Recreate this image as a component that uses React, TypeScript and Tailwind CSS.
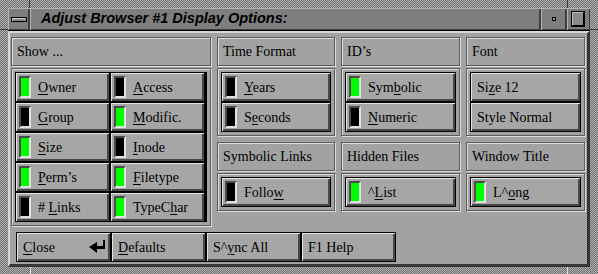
import type { ReactNode } from "react";

function Mn({ children }: { children: ReactNode }) {
  return <span className="underline decoration-1 underline-offset-[2px]">{children}</span>;
}

function Indicator({ on }: { on: boolean }) {
  return (
    <div
      className={`ml-[2px] h-[22px] w-[12px] shrink-0 border-2 border-t-[#4a4a4a] border-l-[#4a4a4a] border-b-[#e2e2e2] border-r-[#e2e2e2] ${
        on ? "bg-[#00ff00]" : "bg-black"
      }`}
    />
  );
}

function Btn({ on, children, icon }: { on?: boolean; children: ReactNode; icon?: ReactNode }) {
  return (
    <div className="flex h-[28px] items-center bg-[#a6a6a6] pl-px shadow-[inset_1px_1px_0_#e4e4e4,inset_-2px_-2px_0_#484848]">
      {on !== undefined ? (
        <>
          <Indicator on={on} />
          <span className="ml-[7px]">{children}</span>
        </>
      ) : (
        <span className="ml-[5px]">{children}</span>
      )}
      {icon}
    </div>
  );
}

function Group({ title, children }: { title: string; children: ReactNode }) {
  return (
    <div className="flex flex-col gap-[2px]">
      <div className="flex h-[29px] items-center border border-[#5c5c5c] pl-[5px] shadow-[inset_1px_1px_0_#dcdcdc,1px_1px_0_#dcdcdc]">
        {title}
      </div>
      <div className="border border-[#5c5c5c] p-[3px] shadow-[inset_1px_1px_0_#dcdcdc,1px_1px_0_#dcdcdc]">
        {children}
      </div>
    </div>
  );
}

function EnterArrow() {
  return (
    <svg width="17" height="13" viewBox="0 0 17 13" className="ml-auto mr-[4px] mt-[-2px]">
      <polygon points="0,7 8,2 8,13" fill="black" />
      <rect x="8" y="6" width="8" height="3" fill="black" />
      <rect x="14" y="0" width="2" height="9" fill="black" />
    </svg>
  );
}

export default function App() {
  return (
    <div className="relative flex h-[274px] w-[598px] flex-col bg-[repeating-conic-gradient(#6e6e6e_0%_25%,#b2b2b2_0%_50%)] bg-size-[2px_2px] px-[8px] pt-[8px] pb-[7px] font-['Liberation_Serif','Times_New_Roman',serif] text-[14px] text-black">
      {/* frame resize marks */}
      <div className="absolute left-[29px] top-0 h-[8px] w-px bg-[#3c3c3c]" />
      <div className="absolute left-[567px] top-0 h-[8px] w-px bg-[#3c3c3c]" />
      <div className="absolute left-[30px] bottom-0 h-[7px] w-px bg-[#e0e0e0]" />
      <div className="absolute left-[567px] bottom-0 h-[7px] w-px bg-[#e0e0e0]" />
      <div className="absolute left-0 top-[29px] h-px w-[8px] bg-[#3c3c3c]" />
      <div className="absolute right-0 top-[29px] h-px w-[8px] bg-[#3c3c3c]" />

      {/* title bar */}
      <div className="flex h-[22px] bg-[#7e7e7e]">
        <div className="flex w-[22px] items-center justify-center shadow-[inset_1px_1px_0_#b4b4b4,inset_-2px_-1px_0_#3e3e3e]">
          <div className="h-[5px] w-[16px] border border-black bg-[#8a8a8a] shadow-[inset_1px_1px_0_#d0d0d0]" />
        </div>
        <div className="flex flex-1 items-center pl-[11px] font-['Liberation_Sans',Arial,sans-serif] text-[14.5px] font-bold italic shadow-[inset_1px_1px_0_#b4b4b4,inset_-2px_-1px_0_#3e3e3e]">
          Adjust Browser #1 Display Options:
        </div>
        <div className="flex w-[26px] items-center justify-center shadow-[inset_1px_1px_0_#b4b4b4,inset_-2px_-1px_0_#3e3e3e]">
          <div className="h-[4px] w-[4px] border border-black bg-[#9a9a9a]" />
        </div>
        <div className="flex w-[23px] items-center justify-center pr-[2px] shadow-[inset_1px_1px_0_#b4b4b4,inset_-1px_-1px_0_#3e3e3e]">
          <div className="h-[16px] w-[14px] border border-black border-r-2 border-b-2 bg-[#8a8a8a] shadow-[inset_1px_1px_0_#c0c0c0]" />
        </div>
      </div>
      <div className="h-px bg-black" />

      {/* client area */}
      <div className="flex flex-1 flex-col border-t-2 border-l-2 border-r-[3px] border-b-[3px] border-t-[#d6d6d6] border-l-[#d6d6d6] border-r-[#363636] border-b-[#363636] bg-[#a2a2a2] pt-[4px] pl-px">
        <div className="flex items-start gap-[6px]">
          <div className="w-[200px]">
            <Group title="Show ...">
              <div className="grid grid-cols-[93px_93px] gap-[2px] bg-black p-px">
                <Btn on><Mn>O</Mn>wner</Btn>
                <Btn on={false}><Mn>A</Mn>ccess</Btn>
                <Btn on={false}><Mn>G</Mn>roup</Btn>
                <Btn on><Mn>M</Mn>odific.</Btn>
                <Btn on><Mn>S</Mn>ize</Btn>
                <Btn on={false}><Mn>I</Mn>node</Btn>
                <Btn on><Mn>P</Mn>erm’s</Btn>
                <Btn on><Mn>F</Mn>iletype</Btn>
                <Btn on={false}># <Mn>L</Mn>inks</Btn>
                <Btn on>TypeC<Mn>h</Mn>ar</Btn>
              </div>
            </Group>
          </div>

          <div className="grid grid-cols-[118px_119px_119px] gap-x-[6px] gap-y-[6px]">
            <Group title="Time Format">
              <div className="flex flex-col gap-[2px] bg-black p-px">
                <Btn on={false}><Mn>Y</Mn>ears</Btn>
                <Btn on={false}>S<Mn>e</Mn>conds</Btn>
              </div>
            </Group>
            <Group title="ID’s">
              <div className="flex flex-col gap-[2px] bg-black p-px">
                <Btn on>Sym<Mn>b</Mn>olic</Btn>
                <Btn on={false}><Mn>N</Mn>umeric</Btn>
              </div>
            </Group>
            <Group title="Font">
              <div className="flex flex-col gap-[2px] bg-black p-px">
                <Btn>Si<Mn>z</Mn>e 12</Btn>
                <Btn>Style Normal</Btn>
              </div>
            </Group>
            <Group title="Symbolic Links">
              <div className="flex flex-col bg-black p-px">
                <Btn on={false}>Follo<Mn>w</Mn></Btn>
              </div>
            </Group>
            <Group title="Hidden Files">
              <div className="flex flex-col bg-black p-px">
                <Btn on>^<Mn>L</Mn>ist</Btn>
              </div>
            </Group>
            <Group title="Window Title">
              <div className="flex flex-col bg-black p-px">
                <Btn on>L^<Mn>o</Mn>ng</Btn>
              </div>
            </Group>
          </div>
        </div>

        <div className="ml-[5px] mt-[6px] flex w-fit gap-[2px] bg-black p-px">
          <div className="w-[93px]">
            <Btn icon={<EnterArrow />}><Mn>C</Mn>lose</Btn>
          </div>
          <div className="w-[93px]">
            <Btn><Mn>D</Mn>efaults</Btn>
          </div>
          <div className="w-[93px]">
            <Btn>S^<Mn>y</Mn>nc All</Btn>
          </div>
          <div className="w-[93px]">
            <Btn>F1 Help</Btn>
          </div>
        </div>
      </div>
    </div>
  );
}
